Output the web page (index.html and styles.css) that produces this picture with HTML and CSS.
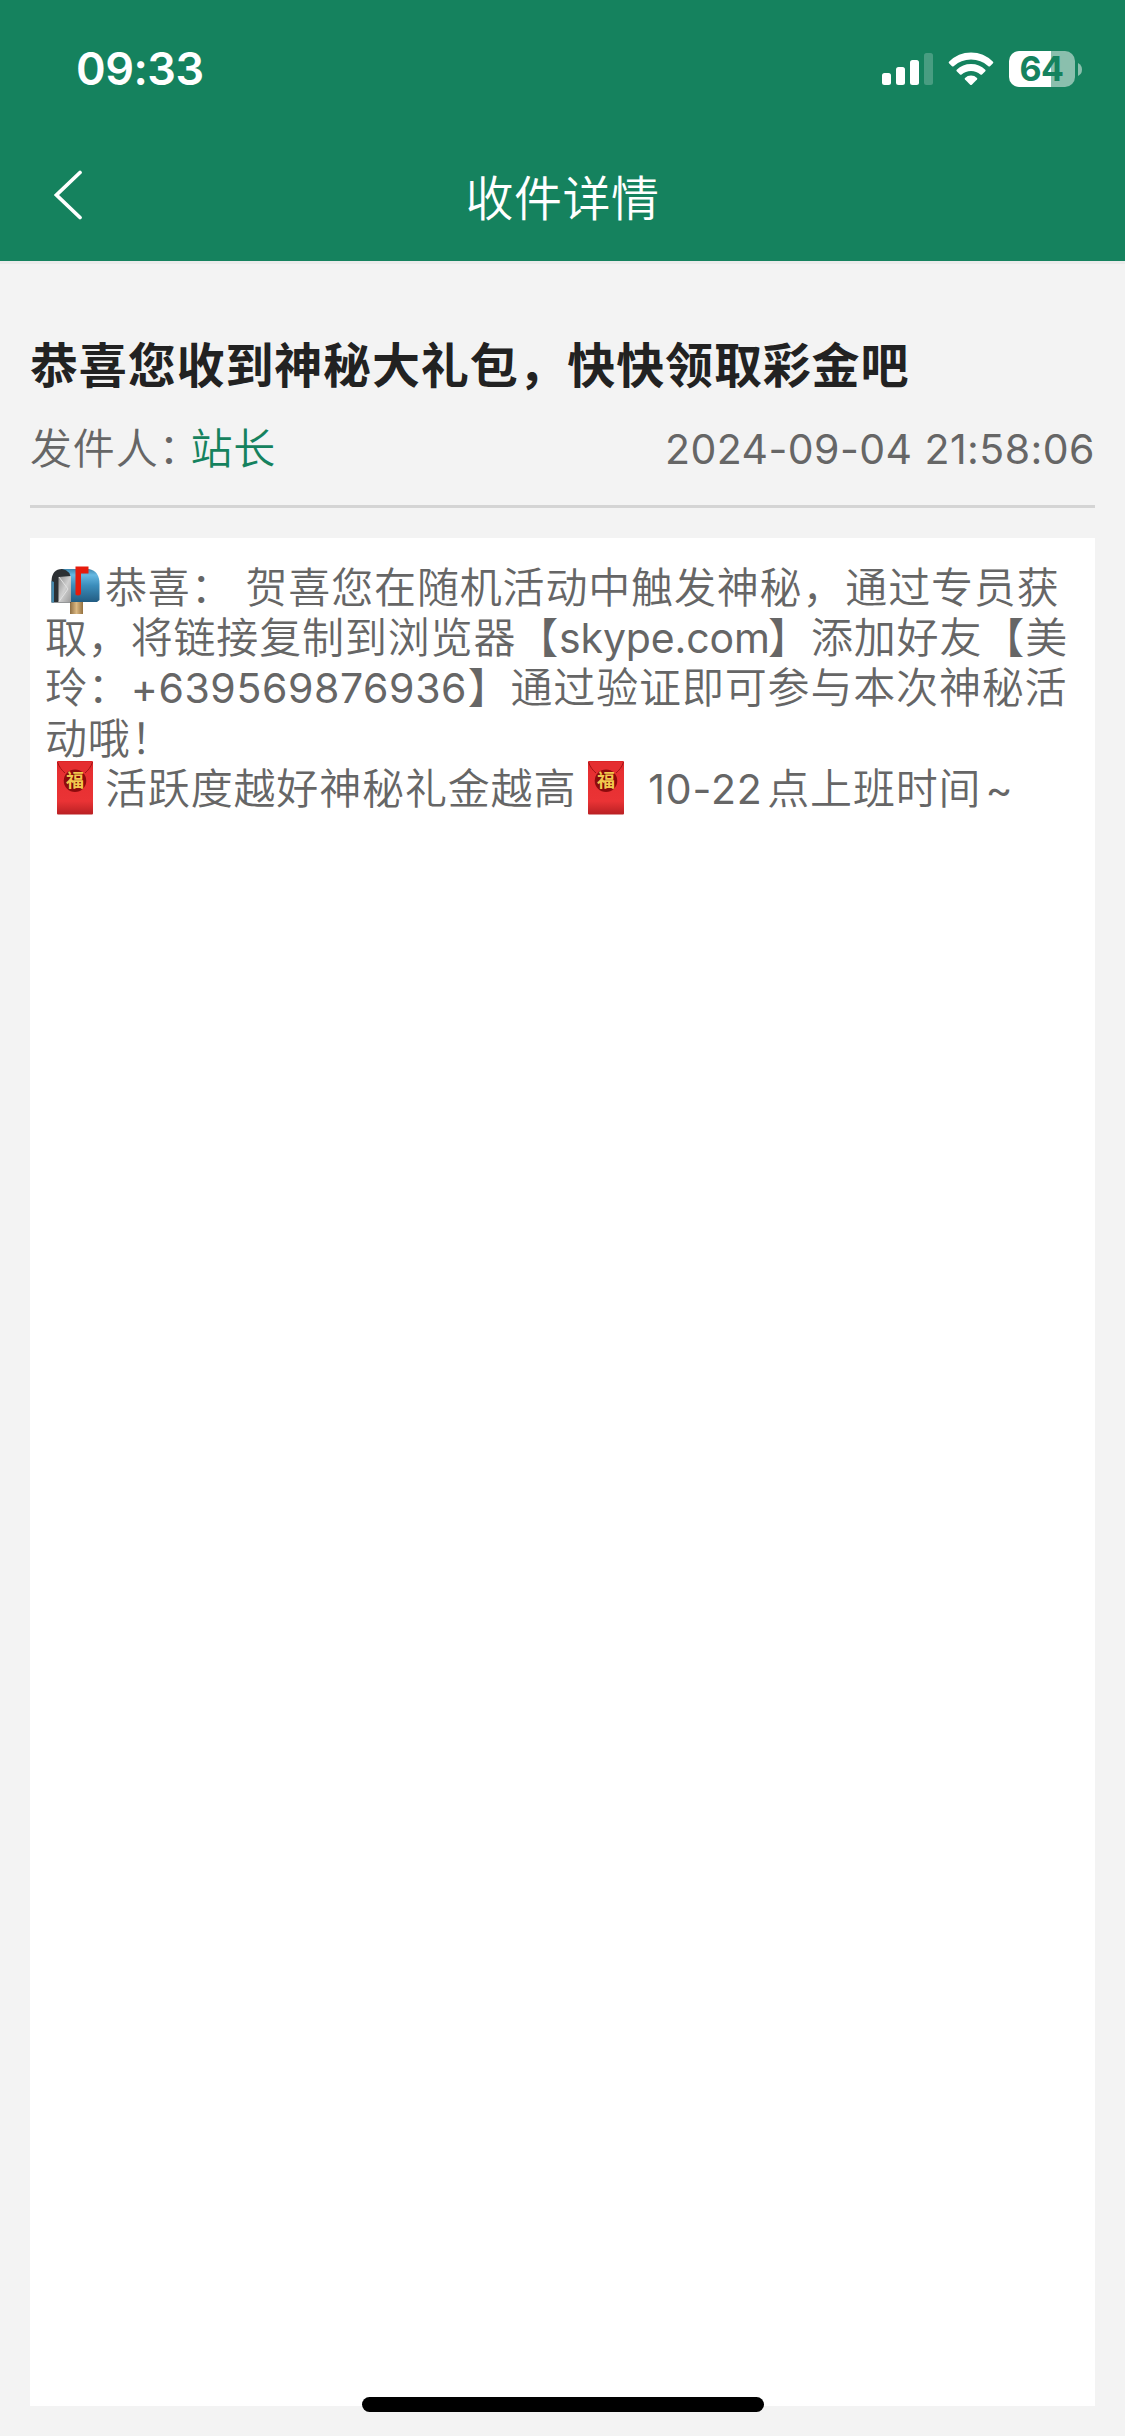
FILE: index.html
```html
<!DOCTYPE html>
<html lang="zh-CN">
<head>
<meta charset="utf-8">
<title>收件详情</title>
<link rel="stylesheet" href="styles.css">
</head>
<body>
<svg class="defs" width="0" height="0" aria-hidden="true">
  <defs>
    <linearGradient id="red" x1="0" y1="0" x2="0" y2="1">
      <stop offset="0" stop-color="#dc2426"/><stop offset=".2" stop-color="#e72f31"/><stop offset=".75" stop-color="#ea3335"/><stop offset="1" stop-color="#b92023"/>
    </linearGradient>
    <radialGradient id="seal"><stop offset="0" stop-color="#7c0809"/><stop offset="1" stop-color="#8f0b0d"/></radialGradient>
    <linearGradient id="box" x1="0" y1="0" x2="0" y2="1">
      <stop offset="0" stop-color="#3f86ad"/><stop offset=".18" stop-color="#66b8e2"/><stop offset=".5" stop-color="#3b8dbb"/><stop offset="1" stop-color="#225c82"/>
    </linearGradient>
    <linearGradient id="post" x1="0" y1="0" x2="1" y2="0">
      <stop offset="0" stop-color="#8d6d42"/><stop offset=".5" stop-color="#dcb983"/><stop offset="1" stop-color="#94713f"/>
    </linearGradient>
    <linearGradient id="letter" x1="0" y1="0" x2="1" y2="1">
      <stop offset="0" stop-color="#8f8f8f"/><stop offset=".5" stop-color="#d0d0d0"/><stop offset="1" stop-color="#9a9a9a"/>
    </linearGradient>
    <symbol id="envelope" viewBox="0 0 36 54">
      <rect width="36" height="53.5" rx="1" fill="url(#red)"/>
      <path d="M0.500 1C3 7 8 12 12 14H24C28 12 33 7 35.500 1" fill="#e52e30"/>
      <path d="M0.500 1C2 6 5 9.500 8 12M35.500 1C34 6 31 9.500 28 12" fill="none" stroke="#a31517" stroke-width="1"/>
      <circle cx="18" cy="19.700" r="11.300" fill="url(#seal)"/>
      <text class="luck" x="18" y="26" text-anchor="middle">福</text>
    </symbol>
  </defs>
</svg>
<div class="screen">
  <header class="header">
    <div class="status">
      <div class="clock">09:33</div>
      <div class="indicators">
        <svg class="signal" viewBox="0 0 51 32" fill="#fff">
          <rect x="0" y="20" width="9" height="12" rx="2.5"/>
          <rect x="14" y="14" width="9" height="18" rx="2.5"/>
          <rect x="28" y="7" width="9" height="25" rx="2.5"/>
          <rect x="42" y="0" width="9" height="32" rx="2.5" opacity=".22"/>
        </svg>
        <svg class="wifi" viewBox="0 0 46 34" fill="#fff">
          <path d="M1 9.7Q0.3 10.5 1 11.2L4 14.2Q4.8 14.9 5.6 14.2Q13 7.6 23 7.6T40.400 14.200Q41.200 14.900 42 14.200L45 11.200Q45.700 10.500 45 9.700Q35.800 0.500 23 0.500T1 9.700Z"/>
          <path d="M8.700 17.800Q8 18.600 8.700 19.300L12 22.500Q12.800 23.200 13.600 22.500Q17.500 19 23 19T32.400 22.500Q33.200 23.200 34 22.500L37.300 19.300Q38 18.600 37.300 17.800Q31.500 11.900 23 11.900T8.700 17.800Z"/>
          <path d="M17 26Q16.300 26.800 17 27.500L22.200 32.700Q23 33.500 23.800 32.700L29 27.500Q29.700 26.800 29 26Q26.500 23.600 23 23.600T17 26Z"/>
        </svg>
        <div class="battery"><span class="level">64</span></div>
        <svg class="nub" viewBox="0 0 4 13"><path d="M0 0Q4 2 4 6.500T0 13Z" fill="#8abfad"/></svg>
      </div>
    </div>
    <div class="navbar">
      <svg class="back" viewBox="0 0 30 50"><path d="M26 2.500L2.500 25L26 47.500" fill="none" stroke="#fff" stroke-width="3.700" stroke-linecap="round"/></svg>
      <h1 class="page-title">收件详情</h1>
    </div>
  </header>
  <main class="mail">
    <h2 class="subject">恭喜您收到神秘大礼包，快快领取彩金吧</h2>
    <div class="meta">
      <div class="from">发件人：<span class="sender">站长</span></div>
      <time class="date">2024-09-04 21:58:06</time>
    </div>
    <article class="content">
      <p class="line"><span class="emoji"><svg class="mailbox" viewBox="0 0 49 49">
        <rect x="19" y="35" width="13" height="13" fill="url(#post)"/>
        <path d="M10 3H38Q48.500 5 48.500 18V34L46 36H10Z" fill="url(#box)"/>
        <path d="M0.500 15Q1 3 11 3Q20 4 20 15V36.500H0.500Z" fill="#2c3033"/>
        <path d="M0.500 15V36.500H3V16Z" fill="#4689ad"/>
        <path d="M7.500 11L20 10V36H7.500Z" fill="url(#letter)"/>
        <path d="M8 11L17 23L8 35.500" fill="none" stroke="#e2e2e2" stroke-width="1"/>
        <path d="M24.500 0.500H37.500V7.500H30V27Q30 29.500 27 29.500T24.500 27Z" fill="#e61b0c"/>
      </svg></span>恭喜：<span class="gap"></span>贺喜您在随机活动中触发神秘，通过专员获</p>
      <p class="line">取，将链接复制到浏览器【<span class="latin site">skype.com</span>】添加好友【美</p>
      <p class="line">玲：<span class="latin phone">+639569876936</span>】通过验证即可参与本次神秘活</p>
      <p class="line">动哦！</p>
      <p class="line"><span class="emoji"><svg class="packet"><use href="#envelope"/></svg></span>活跃度越好神秘礼金越高<span class="emoji"><svg class="packet"><use href="#envelope"/></svg></span><span class="gap"></span><span class="latin hours">10-22</span>点上班时间<span class="latin tilde">~</span></p>
    </article>
  </main>
  <div class="home-bar"></div>
</div>
</body>
</html>
```
FILE: styles.css
```css
* { box-sizing: border-box; margin: 0; padding: 0; }

body {
  background: #f3f3f3;
  color: #666;
  font-family: "Noto Sans CJK SC", sans-serif;
}

.defs { position: absolute; }

.screen {
  position: relative;
  width: 1125px;
  height: 2436px;
  display: flex;
  flex-direction: column;
  overflow: hidden;
}

.header {
  height: 264px;
  flex: none;
  background: #15825e;
  border-bottom: 3px solid #ebebeb;
  color: #fff;
}

.status {
  height: 132px;
  padding: 6px 43px 0 76px;
  display: flex;
  justify-content: space-between;
  align-items: center;
}

.clock {
  font: 600 45px/60px Inter, sans-serif;
  letter-spacing: -0.500px;
}

.indicators { display: flex; align-items: center; }
.signal { width: 51px; height: 32px; margin-right: 14.500px; }
.wifi { width: 46px; height: 34px; margin-right: 15.500px; }

.battery {
  width: 66px;
  height: 36px;
  border-radius: 10px;
  background: linear-gradient(90deg, #fff 42px, #8abfad 42px);
  display: flex;
  justify-content: center;
  align-items: center;
}

.level {
  font: 700 34px/36px Inter, sans-serif;
  letter-spacing: -0.500px;
  padding-right: 1px;
  color: #15825e;
}

.nub { width: 4px; height: 13px; margin-left: 3px; }

.navbar {
  height: 125px;
  padding: 0 54px;
  display: grid;
  grid-template-columns: 30px 1fr 30px;
  align-items: center;
}

.back { width: 30px; height: 50px; }

.page-title {
  font-size: 48px;
  font-weight: 350;
  line-height: 70px;
  letter-spacing: 0.5px;
  text-align: center;
}

.mail {
  flex: 1;
  padding: 63px 30px 30px;
  display: flex;
  flex-direction: column;
}

.subject {
  font-size: 48px;
  font-weight: 600;
  line-height: 70px;
  letter-spacing: 0.850px;
  color: #222;
  white-space: nowrap;
}

.meta {
  height: 111px;
  padding-top: 16px;
  border-bottom: 3px solid #d4d4d4;
  display: flex;
  justify-content: space-between;
}

.from, .line {
  font-size: 42px;
  font-weight: 350;
  letter-spacing: 0.840px;
  white-space: nowrap;
}

.from { line-height: 66px; }
.sender { margin-left: -11px; color: #15825e; }

.date {
  font: 400 41px/72px Inter, sans-serif;
  letter-spacing: 0.450px;
}

.content {
  flex: 1;
  margin-top: 30px;
  padding: 22px 15px;
  background: #fff;
}

.line { height: 50.200px; line-height: 50.200px; }

.emoji {
  display: inline-flex;
  width: 60px;
  height: 54px;
  margin-bottom: -4px;
  align-items: center;
  justify-content: center;
  vertical-align: top;
}

.mailbox { width: 49px; height: 49px; margin-top: 7px; flex: none; }
.packet { width: 36px; height: 54px; flex: none; }
.luck { font: 700 18px "Noto Sans CJK SC", sans-serif; fill: #f2c94e; letter-spacing: 0; }
.gap { display: inline-block; width: 12px; }

.latin {
  display: inline-block;
  font: 400 41px/50px Inter, sans-serif;
  letter-spacing: 0;
  vertical-align: baseline;
}

.site { width: 209px; letter-spacing: -0.150px; }
.phone { width: 337px; letter-spacing: 0.600px; }
.hours { width: 119px; letter-spacing: 0.900px; }
.tilde { width: 30px; padding-left: 4px; }

.home-bar {
  position: absolute;
  left: 362px;
  top: 2397px;
  width: 402px;
  height: 15px;
  border-radius: 8px;
  background: #000;
}
```
